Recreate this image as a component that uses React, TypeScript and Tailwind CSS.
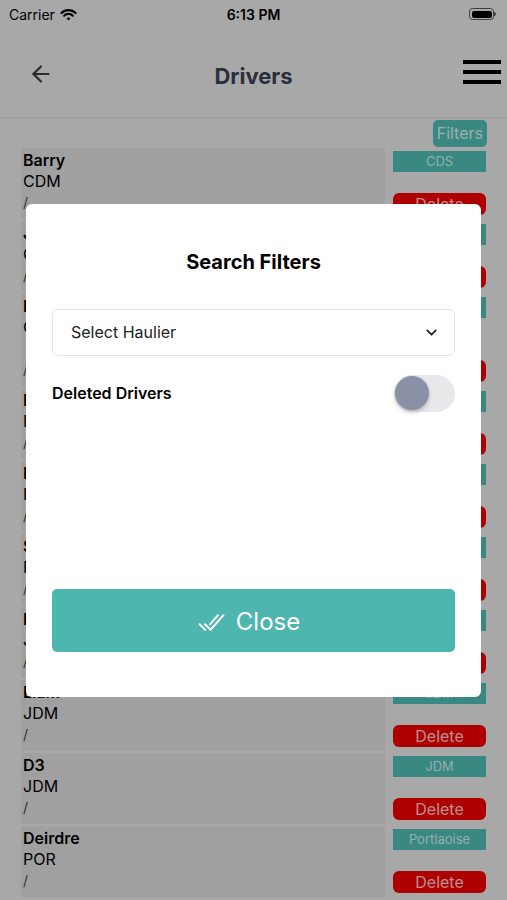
import React from 'react';
import { ArrowLeft, ChevronDown } from 'lucide-react';

type Driver = { name: string; code: string; tag: string; extra?: boolean };

const drivers: Driver[] = [
  { name: 'Barry', code: 'CDM', tag: 'CDS' },
  { name: 'John', code: 'CDM', tag: 'CDS' },
  { name: 'Ian', code: 'CDM', tag: 'CDS', extra: true },
  { name: 'Ivan', code: 'FDM', tag: 'Ferbane' },
  { name: 'Ivor', code: 'FDM', tag: 'Ferbane' },
  { name: 'Sean', code: 'FDM', tag: 'Ferbane' },
  { name: 'Mick', code: 'JDM', tag: 'JDM' },
  { name: 'Liam', code: 'JDM', tag: 'JDM' },
  { name: 'D3', code: 'JDM', tag: 'JDM' },
  { name: 'Deirdre', code: 'POR', tag: 'Portlaoise' },
];

function Wifi() {
  return (
    <svg width="17" height="13" viewBox="0 0 17 13" fill="none">
      <path d="M1.5 5A10 10 0 0 1 15.5 5" stroke="#000" strokeWidth="2.2" strokeLinecap="round" />
      <path d="M4.2 7.7A6.2 6.2 0 0 1 12.8 7.7" stroke="#000" strokeWidth="2.2" strokeLinecap="round" />
      <path d="M8.5 12.5 6.6 10.4A2.7 2.7 0 0 1 10.4 10.4Z" fill="#000" />
    </svg>
  );
}

function Battery() {
  return (
    <div className="flex items-center">
      <div className="w-[25px] h-[12px] rounded-[3.5px] border border-[#555] p-[1.5px]">
        <div className="w-full h-full rounded-[2px] bg-black" />
      </div>
      <div className="w-[2px] h-[4px] rounded-r-sm bg-[#555]" />
    </div>
  );
}

function DoubleCheck() {
  return (
    <svg width="29" height="29" viewBox="0 0 512 512" fill="none" stroke="#fff" strokeWidth="34" strokeLinecap="square">
      <path d="M464 128 240 384l-96-96" />
      <path d="m144 384-96-96" />
      <path d="M368 128 232 284" />
    </svg>
  );
}

function DriverRow({ d }: { d: Driver }) {
  return (
    <div className="flex gap-2">
      <div className="flex-1 bg-[#d6d6d6] border-b-2 border-[#e0e0e0] pl-[2px] pt-[2px] pb-[6px] text-[16px] leading-[21px] text-black">
        <div className="font-semibold">{d.name}</div>
        <div>{d.code}</div>
        {d.extra && <div>&nbsp;</div>}
        <div className="text-[#444] text-[14px]">/</div>
      </div>
      <div className="w-[93px] flex flex-col justify-between pt-[3px] pb-[6px]">
        <div className="h-[21px] bg-[#4db6ae] text-white/70 text-[13px] leading-[21px] text-center">{d.tag}</div>
        <div className="h-[22px] rounded-[6px] bg-[#e80000] text-white/75 text-[16px] leading-[22px] text-center">Delete</div>
      </div>
    </div>
  );
}

export default function App() {
  return (
    <div className="relative w-[507px] h-[900px] overflow-hidden bg-[#e0e0e0] font-['Inter','Liberation_Sans',sans-serif]">
      {/* Status bar */}
      <div className="h-[28px] grid grid-cols-3 items-center px-[9px] text-black">
        <div className="flex items-center gap-[5px] text-[14px]">
          Carrier <Wifi />
        </div>
        <div className="text-center text-[14px] font-semibold">6:13 PM</div>
        <div className="flex justify-end pr-[2px]">
          <Battery />
        </div>
      </div>

      {/* Nav */}
      <div className="h-[90px] grid grid-cols-[1fr_auto_1fr] items-center border-b border-[#d4d4d4] px-[6px]">
        <div className="pt-[2px] pl-[22px]">
          <ArrowLeft size={26} strokeWidth={2} color="#3a3a3a" />
        </div>
        <div className="pt-[8px] text-[22px] font-bold text-[#374151]">Drivers</div>
        <div className="flex flex-col items-end gap-[6px] pb-[1px]">
          <div className="w-[38px] h-[4px] bg-black" />
          <div className="w-[38px] h-[4px] bg-black" />
          <div className="w-[38px] h-[4px] bg-black" />
        </div>
      </div>

      {/* Filters */}
      <div className="flex justify-end pr-[20px] pt-[2px]">
        <div className="h-[27px] px-[4px] rounded-[5px] bg-[#4db6ae] text-white/75 text-[16px] leading-[27px]">Filters</div>
      </div>

      {/* List */}
      <div className="px-[21px] pt-[1px] flex flex-col">
        {drivers.map(d => (
          <DriverRow key={d.name} d={d} />
        ))}
      </div>

      {/* Modal */}
      <div className="absolute inset-0 bg-black/25 flex items-center justify-center">
        <div className="w-[455px] h-[493px] bg-white rounded-[6px] flex flex-col px-[26px] pt-[44px] pb-[45px]">
          <h2 className="text-center text-[20px] leading-[28px] font-bold text-black">Search Filters</h2>
          <div className="mt-[33px] h-[47px] border border-[#e3e3e3] rounded-[6px] flex items-center justify-between pl-[18px] pr-[14px]">
            <span className="text-[16px] text-[#222]">Select Haulier</span>
            <ChevronDown size={17} strokeWidth={2.5} color="#222" />
          </div>
          <div className="mt-[19px] flex items-center justify-between">
            <span className="text-[16px] font-semibold text-black">Deleted Drivers</span>
            <div className="relative w-[61px] h-[37px] rounded-full bg-[#e9e9eb]">
              <div className="absolute left-[1px] top-[1.5px] w-[34px] h-[34px] rounded-full bg-[#8a91a6] shadow-[0_2px_4px_rgba(0,0,0,0.25)]" />
            </div>
          </div>
          <div className="mt-auto h-[63px] rounded-[5px] bg-[#4db6ae] flex items-center justify-center gap-[10px] pr-[10px] pt-[4px] text-white text-[24px]">
            <DoubleCheck />
            <span>Close</span>
          </div>
        </div>
      </div>
    </div>
  );
}
